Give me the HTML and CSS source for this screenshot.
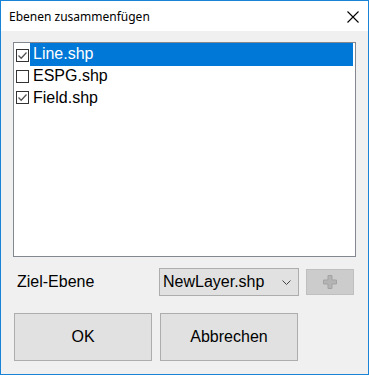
FILE: index.html
```html
<!DOCTYPE html>
<html>
<head>
<meta charset="utf-8">
<link rel="stylesheet" href="styles.css">
</head>
<body>
<div class="window">
  <div class="titlebar">
    <span class="title">Ebenen zusammenfügen</span>
    <svg class="close" width="12" height="12" viewBox="0 0 12 12"><path d="M0.5 0.5 L11.5 11.5 M11.5 0.5 L0.5 11.5" stroke="#000" stroke-width="1.1" fill="none"/></svg>
  </div>
  <div class="content">
    <div class="listbox">
      <div class="item selected">
        <span class="check"><svg width="11" height="11" viewBox="0 0 11 11"><path d="M1.5 5.5 L4.2 8.2 L9.5 2.5" stroke="#555" stroke-width="1.3" fill="none"/></svg></span>
        <span class="label">Line.shp</span>
      </div>
      <div class="item">
        <span class="check"></span>
        <span class="label">ESPG.shp</span>
      </div>
      <div class="item">
        <span class="check"><svg width="11" height="11" viewBox="0 0 11 11"><path d="M1.5 5.5 L4.2 8.2 L9.5 2.5" stroke="#555" stroke-width="1.3" fill="none"/></svg></span>
        <span class="label">Field.shp</span>
      </div>
    </div>
    <div class="target-row">
      <span class="target-label">Ziel-Ebene</span>
      <div class="combo">
        <span class="combo-text">NewLayer.shp</span>
        <svg class="chevron" width="9" height="5" viewBox="0 0 9 5"><path d="M0.5 0.5 L4.5 4.5 L8.5 0.5" stroke="#444" stroke-width="1" fill="none"/></svg>
      </div>
      <div class="plus-btn">
        <svg width="14" height="14" viewBox="0 0 14 14"><path d="M5 0.5 H9 V5 H13.5 V9 H9 V13.5 H5 V9 H0.5 V5 H5 Z" fill="#b4b4b4" stroke="#a3a3a3" stroke-width="1"/></svg>
      </div>
    </div>
    <div class="button-row">
      <div class="btn">OK</div>
      <div class="btn">Abbrechen</div>
    </div>
  </div>
</div>
</body>
</html>
```
FILE: styles.css
```css
html, body {
  margin: 0;
  padding: 0;
  background: #f0f0f0;
}
.window {
  width: 369px;
  height: 375px;
  box-sizing: border-box;
  border: 1px solid #1883d7;
  background: #f0f0f0;
  display: flex;
  flex-direction: column;
  font-family: "Liberation Sans", Arial, sans-serif;
  font-size: 16px;
  color: #000;
}
.titlebar {
  height: 30px;
  background: #fff;
  display: flex;
  align-items: center;
  justify-content: space-between;
  padding: 0 9px 0 8px;
  flex-shrink: 0;
}
.title {
  font-family: "Noto Sans", "Open Sans", sans-serif;
  font-size: 12px;
  color: #000;
  margin-top: 1px;
}
.close {
  display: block;
  margin-top: 1px;
}
.content {
  padding: 11px 12px 0 12px;
  display: flex;
  flex-direction: column;
}
.listbox {
  height: 215px;
  box-sizing: border-box;
  border: 1px solid #828790;
  background: #fff;
  padding: 0 2px 0 2px;
}
.item {
  height: 21.5px;
  display: flex;
  align-items: center;
}
.item:first-child {
  height: 22.5px;
}
.check {
  width: 13px;
  height: 13px;
  box-sizing: border-box;
  border: 1px solid #333;
  background: #fff;
  display: flex;
  align-items: center;
  justify-content: center;
  margin-left: 0;
  flex-shrink: 0;
}
.item:first-child .check {
  margin-top: 2px;
}
.label {
  margin-left: 1px;
  padding-left: 3px;
  height: 100%;
  display: flex;
  align-items: center;
  flex: 1;
}
.item.selected .label {
  background: #0078d7;
  color: #fff;
}
.target-row {
  display: flex;
  align-items: center;
  margin-top: 11px;
  height: 28px;
}
.target-label {
  width: 142px;
  padding-left: 4px;
  flex-shrink: 0;
}
.combo {
  width: 140px;
  height: 28px;
  box-sizing: border-box;
  border: 1px solid #adadad;
  background: #e1e1e1;
  display: flex;
  align-items: center;
  justify-content: space-between;
  padding: 0 7px 0 3px;
}
.chevron {
  display: block;
  margin-top: 1px;
}
.plus-btn {
  margin-left: 7px;
  width: 48px;
  height: 26px;
  box-sizing: border-box;
  border: 1px solid #bfbfbf;
  background: #cccccc;
  display: flex;
  align-items: center;
  justify-content: center;
}
.plus-btn svg {
  display: block;
}
.button-row {
  display: flex;
  gap: 8px;
  margin-top: 17px;
  padding-left: 1px;
}
.btn {
  width: 138px;
  height: 48px;
  box-sizing: border-box;
  border: 1px solid #adadad;
  background: #e1e1e1;
  display: flex;
  align-items: center;
  justify-content: center;
}
```
